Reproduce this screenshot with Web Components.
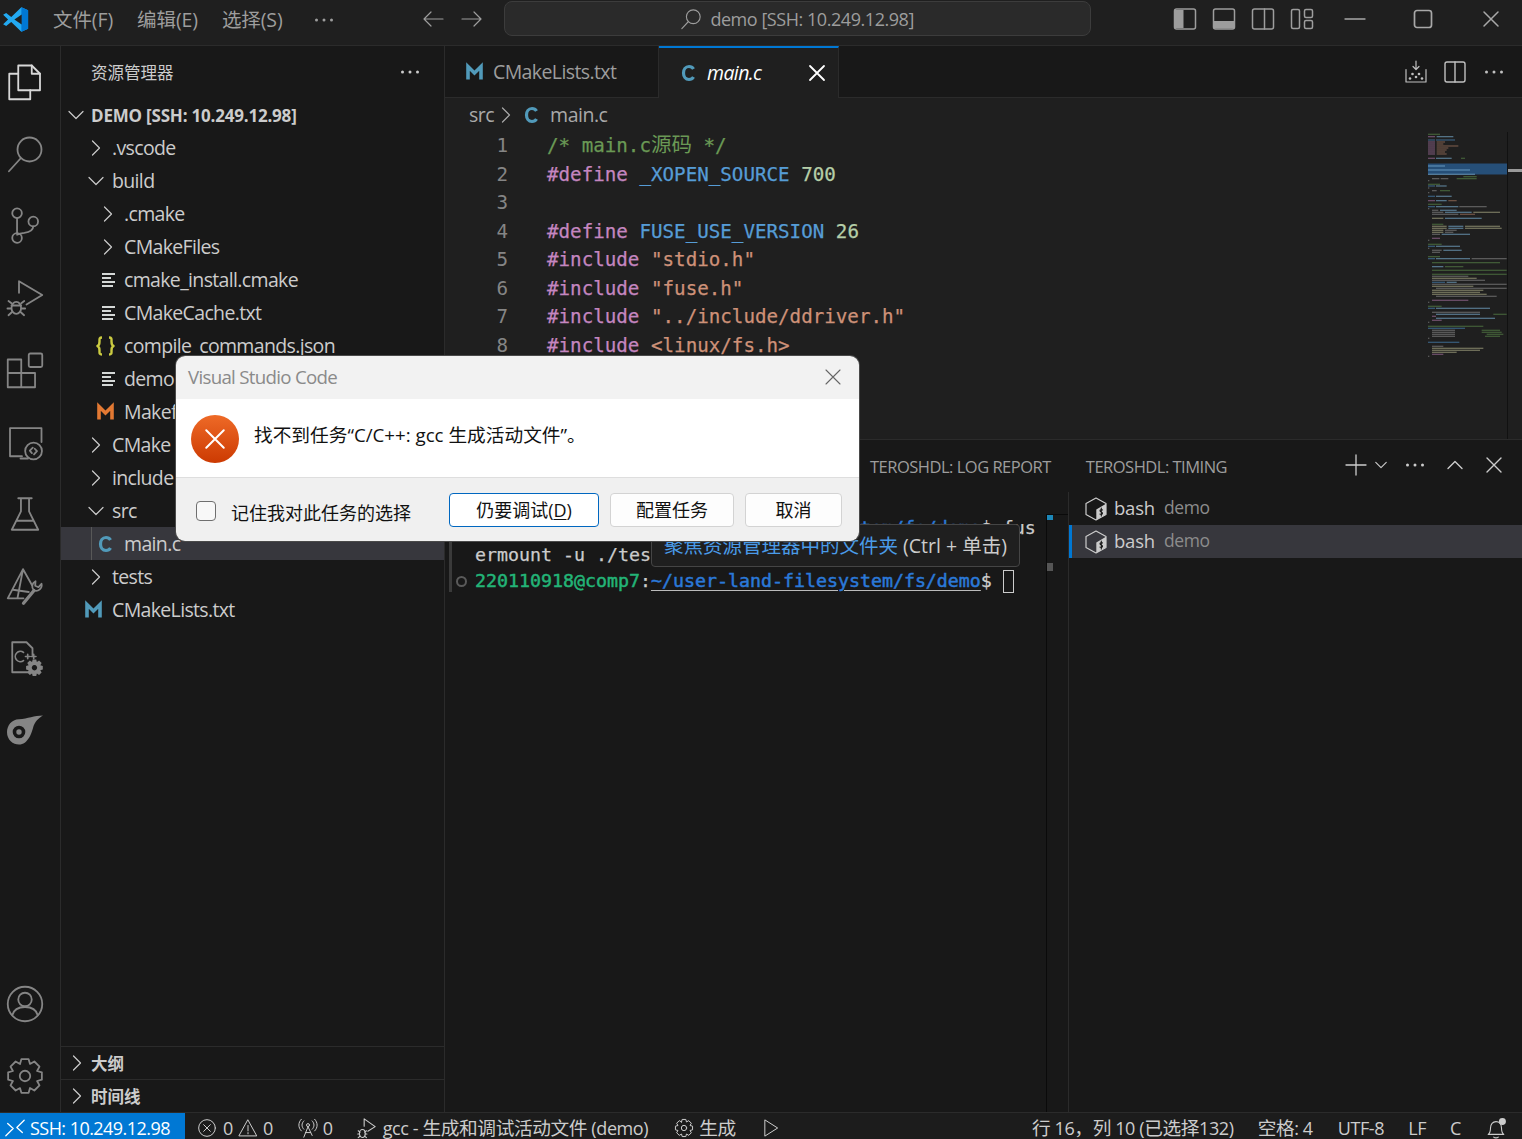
<!DOCTYPE html>
<html lang="zh">
<head>
<meta charset="utf-8">
<title>main.c - demo</title>
<style>
    html, body {
        margin: 0;
        height: 100%;
        overflow: hidden;
        background: #181818;
    }
    body {
        display: flex;
        flex-direction: column;
        position: relative;
        font-family: "Open Sans", "Noto Sans CJK SC", sans-serif;
        color: #cccccc;
    }
</style>
</head>
<body>
<vs-titlebar></vs-titlebar>
<vs-workbench>
    <vs-activitybar></vs-activitybar>
    <vs-sidebar></vs-sidebar>
    <vs-maincolumn>
        <vs-editor></vs-editor>
        <vs-panel></vs-panel>
    </vs-maincolumn>
</vs-workbench>
<vs-statusbar></vs-statusbar>
<vs-tooltip>
    <span slot="link">聚焦资源管理器中的文件夹</span>
    <span slot="hint">(Ctrl + 单击)</span>
</vs-tooltip>
<vs-dialog></vs-dialog>

<script>
const UI_FONT = `"Open Sans", "Noto Sans CJK SC", sans-serif`;
const MONO_FONT = `"DejaVu Sans Mono", "Noto Sans CJK SC", monospace`;

// gear outline, used by settings and the small ones
function gearPath(cx, cy, ro, ri, n) {
    let d = "";
    const step = Math.PI * 2 / n;
    for (let i = 0; i < n; i++) {
        const a = i * step - Math.PI / 2;
        const pts = [[ri, -0.5], [ro, -0.27], [ro, 0.27], [ri, 0.5]];
        for (const [r, f] of pts) {
            const x = cx + r * Math.cos(a + f * step);
            const y = cy + r * Math.sin(a + f * step);
            d += (d ? "L" : "M") + x.toFixed(2) + " " + y.toFixed(2);
        }
    }
    return d + "Z";
}

const ICONS = {
    // activity bar
    files: `<path d="M7.5 6V1h9l5.5 5.5v11H7.5z"/><path d="M16.5 1v5.5H22"/><path d="M7.5 6.5H1.5v17h14v-6"/>`,
    search: `<circle cx="15" cy="9" r="8"/><path d="M9 15L1.3 23.5"/>`,
    scm: `<circle cx="6.7" cy="3.5" r="3.2"/><circle cx="6.7" cy="20" r="3.2"/><circle cx="17.5" cy="9" r="3.2"/><path d="M6.7 6.7v10.1M17.5 12.2c0 3.2-3 4-6 4.4-3 .3-4.8 1.2-4.8 1.2"/>`,
    debug: `<path d="M8 8.5V.8L23.5 10l-10.5 6.3"/><ellipse cx="6.2" cy="18.6" rx="3.2" ry="4"/><path d="M3 15.5l-2-1.5M9.5 15.5l2-1.5M2.8 19H.3M9.6 19h2.5M3.2 21.5L1 23.5M9.2 21.5l2.2 2M3 17h6.4"/>`,
    extensions: `<path d="M.5 5h9v9h-9zM.5 14h9v9.5h-9zM9.5 14h9.2v9.5H9.5z"/><rect x="14.5" y="1" width="9" height="9" rx="1"/>`,
    remote: `<path d="M10 21.5H2V2.8h21V12"/><path d="M9 23h5"/><circle cx="17.7" cy="18" r="5.6"/><path d="M17.2 15.8l-2 2 1.4 1.6M18.5 16.5l1.5 1.6-2 2.2"/>`,
    flask: `<path d="M7.5 1.5h9M9.3 1.5v8.7L3.2 22.5h17.6L14.7 10.2V1.5M6.2 16.5h11.6"/>`,
    teros: `<path d="M10.7.8L.5 20.2h10.5M10.7.8l6 10.7M10.7.8L7 20M4 14.5l10.5 1.5"/><path d="M11 23.5l7-8.5" stroke-width="2.2"/><path d="M18 15a3.8 3.8 0 0 1 1-6.2l-.2 3 2.2 1 2-2.3a3.8 3.8 0 0 1-5 4.5z"/>`,
    cppdoc: `<path d="M14 21.5H3.5V1.5H13l4 4V10"/><path d="M11 8.3a3.4 3.4 0 1 0 0 5.4M12.3 11h3M13.8 9.5v3M16.3 11h3M17.8 9.5v3" stroke-width="1.1"/><path fill="currentColor" fill-rule="evenodd" stroke="none" d="${gearPath(18.3, 18.5, 5.7, 4.2, 8)}M18.3 16.7a1.8 1.8 0 1 0 .01 0z"/>`,
    blob: `<path fill="currentColor" stroke="none" d="M24 2.3C18 2.3 14 4.5 8 4.8 3 5 0 9 0 13.5c0 5 4 8.2 8 8.2 6 0 8.5-7.7 9.5-11.7C18.5 6.5 21 4 24 2.3z"/><circle cx="8" cy="13.3" r="3" stroke="#181818" stroke-width="2.4"/>`,
    account: `<circle cx="12" cy="12" r="11.5"/><circle cx="12" cy="9" r="4.5"/><path d="M3.5 19.5c1-3.8 4-5.5 8.5-5.5s7.5 1.7 8.5 5.5"/>`,
    gear: `<path d="${gearPath(12, 12, 11.5, 8.7, 8)}"/><circle cx="12" cy="12" r="3.5"/>`,
    // generic
    chevR: `<path d="M8.5 5l7 7-7 7"/>`,
    chevD: `<path d="M5 8.5l7 7 7-7"/>`,
    chevU: `<path d="M5 15.5l7-7 7 7"/>`,
    close: `<path d="M5 5l14 14M19 5L5 19"/>`,
    dots: `<circle cx="4.5" cy="12" r="1.5" fill="currentColor" stroke="none"/><circle cx="12" cy="12" r="1.5" fill="currentColor" stroke="none"/><circle cx="19.5" cy="12" r="1.5" fill="currentColor" stroke="none"/>`,
    arrowL: `<path d="M22 12H3M10 5l-7 7 7 7"/>`,
    arrowR: `<path d="M2 12h19M14 5l7 7-7 7"/>`,
    plus: `<path d="M12 2v20M2 12h20"/>`,
    // title bar layout
    sideOn: `<rect x="1.5" y="2" width="21" height="20" rx="2"/><path fill="currentColor" stroke="none" d="M2 3h8.5v18H2z"/>`,
    panelOn: `<rect x="1.5" y="2" width="21" height="20" rx="2"/><path fill="currentColor" stroke="none" d="M2 14h20v7.5H2z"/>`,
    auxOff: `<rect x="1.5" y="2" width="21" height="20" rx="2"/><path d="M13.5 2v20"/>`,
    grid: `<rect x="1.5" y="2.5" width="8" height="19" rx="1.5"/><rect x="14.5" y="2.5" width="8" height="8" rx="1.5"/><rect x="14.5" y="13.5" width="8" height="8" rx="1.5"/>`,
    minimize: `<path d="M2 12h20"/>`,
    maximize: `<rect x="3.5" y="3.5" width="17" height="17" rx="2.5"/>`,
    // editor actions
    tray: `<path d="M2 9.5V22h20V9.5M12 1v8M9 6.5l3 3 3-3"/><g fill="currentColor" stroke="none"><circle cx="8.5" cy="14" r="1.3"/><circle cx="15" cy="14" r="1.3"/><circle cx="12" cy="17" r="1.3"/><circle cx="6" cy="18.5" r="1.3"/><circle cx="18" cy="18.5" r="1.3"/></g>`,
    split: `<rect x="2" y="2" width="20" height="20" rx="2"/><path d="M12 2v20"/>`,
    // file icons
    fileM: `<path d="M6 19.5V6.5l6.5 6.5L19 6.5v13" stroke-width="3.6" stroke-linecap="butt" stroke-linejoin="miter"/>`,
    fileC: `<path d="M17.5 8C16.5 6.3 15 5.5 13 5.5 9.5 5.5 7.5 8.5 7.5 12s2 6.5 5.5 6.5c2 0 3.5-.8 4.5-2.5" stroke-width="3.2" stroke-linecap="butt"/>`,
    fileLines: `<path d="M6 6h13M6 10h9M6 14h13M6 18h11" stroke-width="1.8" stroke-linecap="butt"/>`,
    fileJson: `<path d="M9 3.5c-3 0-2.5 1.5-2.5 4S6 11.5 4.5 12C6 12.5 6.5 14 6.5 16.5s-.5 4 2.5 4M16 3.5c3 0 2.5 1.5 2.5 4s.5 4 2 4.5c-1.5.5-2 2-2 4.5s.5 4-2.5 4" stroke-width="2.4" stroke-linecap="butt"/>`,
    // terminal
    bash: `<path d="M12 1l10 5.5v11L12 23 2 17.5v-11z"/><path fill="currentColor" stroke="none" d="M12.3 12.5L22 6.8v10.5l-9.7 5.4z"/><path stroke="#181818" stroke-width="1.1" d="M18.5 13c-1-.8-2.5-.3-2.500.8 0 1.500 2.500 1 2.500 2.500 0 1.100-1.500 1.500-2.500.8M17.300 11v8"/>`,
    // status bar
    remoteSsh: `<path d="M2 20.5L10 12.5 4 7M22 3.5L14 11.5 20 17"/>`,
    errorCircle: `<circle cx="12" cy="12" r="10"/><path d="M8 8l8 8M16 8l-8 8"/>`,
    warning: `<path d="M12 2.5L22.5 21.5h-21zM12 9v6.5M12 17.500v1.500"/>`,
    broadcast: `<circle cx="12" cy="8.5" r="1.8"/><path d="M12 10.5L7 23M12 10.5l5 10.5M9 17.5h6M7 3.500c-3 3-3 7 0 10M17 3.500c3 3 3 7 0 10M4 1.500c-4 4-4 10 0 14M20 1.500c4 4 4 10 0 14"/>`,
    debugSmall: `<path d="M10 10V2l12 8.5-8 5"/><ellipse cx="8" cy="18" rx="3.2" ry="4.3"/><path d="M3.5 15l2 1.5M12.5 15l-2 1.5M3 18.5h2M11 18.5h2M3.5 22.5l2-1.5M12.5 22.5l-2-1.5"/>`,
    gearSmall: `<path d="${gearPath(12, 12, 10.5, 7.8, 8)}"/><circle cx="12" cy="12" r="3.2"/>`,
    play: `<path d="M5 2.5L20 12 5 21.5z"/>`,
    bell: `<path d="M3.5 19c2-1.5 2.5-3 2.5-7 0-4 2.5-7 6-7s6 3 6 7c0 4 .5 5.5 2.5 7zM9.5 22c1 1 4 1 5 0"/><circle cx="19" cy="5" r="3.8" fill="currentColor" stroke="none"/>`,
    searchSmall: `<circle cx="14.5" cy="9.5" r="7.5"/><path d="M9 15L2 22.5"/>`
};

class VsIcon extends HTMLElement {
    constructor() {
        super();
        this.root = this.attachShadow({ mode: "open" });
    }

    connectedCallback() {
        const size = this.getAttribute("size") || 24;
        const sw = this.getAttribute("sw") || 1.2;
        this.root.innerHTML = `
            <style>
                :host { display: inline-flex; flex: none; width: ${size}px; height: ${size}px; }
                svg { width: 100%; height: 100%; display: block; overflow: visible; }
            </style>
            <svg viewBox="0 0 24 24" fill="none" stroke="currentColor" stroke-width="${sw}"
                 stroke-linecap="round" stroke-linejoin="round">${ICONS[this.getAttribute("name")] || ""}</svg>
        `;
    }
}
window.customElements.define("vs-icon", VsIcon);

class VsTitlebar extends HTMLElement {
    constructor() {
        super();
        this.root = this.attachShadow({ mode: "open" });
    }

    connectedCallback() {
        this.root.innerHTML = `
            <style>
                :host {
                    display: flex;
                    flex: none;
                    align-items: center;
                    height: 45px;
                    background: #1f1f1f;
                    border-bottom: 1px solid #2b2b2b;
                    color: #9d9d9d;
                    font: 19.5px/1 ${UI_FONT};
                    letter-spacing: -0.1px;
                }
                .logo { margin-left: 2px; width: 27px; height: 27px; margin-top: -7px; }
                .menu { margin-left: 24px; margin-top: -6px; display: flex; gap: 24px; align-items: center; }
                .menu vs-icon { margin-left: 5px; }
                .nav { margin-left: 85px; display: flex; gap: 15px; margin-top: -7px; }
                .search {
                    margin-left: 20px;
                    width: 585px;
                    height: 33px;
                    margin-top: -8px;
                    display: flex;
                    align-items: center;
                    justify-content: center;
                    gap: 8px;
                    background: #2a2a2a;
                    border: 1px solid #3c3c3c;
                    border-radius: 8px;
                    font-size: 18px;
                    letter-spacing: -0.45px;
                }
                .layout { margin-left: 82px; display: flex; gap: 15px; margin-top: -7px; }
                .win { display: flex; margin-left: 29px; gap: 44px; margin-top: -7px; color: #a8a8a8; }
            </style>
            <svg class="logo" viewBox="0 0 24 24">
                <path fill="#23a9f1" d="M17.2 1l6 2.8v16.4l-6 2.8-9-8.8-4.5 3.5L1 16.2 5.4 12 1 7.8l2.7-1.5 4.5 3.5z"/>
                <path fill="#0078d4" d="M17.2 1l6 2.8v16.4l-6 2.8z"/>
                <path fill="#1f1f1f" d="M17.5 7.5L11 12l6.5 4.5z"/>
            </svg>
            <div class="menu">
                <span>文件(F)</span><span>编辑(E)</span><span>选择(S)</span>
                <vs-icon name="dots" size="24"></vs-icon>
            </div>
            <div class="nav">
                <vs-icon name="arrowL" size="24"></vs-icon>
                <vs-icon name="arrowR" size="24"></vs-icon>
            </div>
            <div class="search">
                <vs-icon name="searchSmall" size="22"></vs-icon>
                <span>demo [SSH: 10.249.12.98]</span>
            </div>
            <div class="layout">
                <vs-icon name="sideOn" size="24" sw="1.5"></vs-icon>
                <vs-icon name="panelOn" size="24" sw="1.5"></vs-icon>
                <vs-icon name="auxOff" size="24" sw="1.5"></vs-icon>
                <vs-icon name="grid" size="24" sw="1.5"></vs-icon>
            </div>
            <div class="win">
                <vs-icon name="minimize" size="24" sw="1.3"></vs-icon>
                <vs-icon name="maximize" size="24" sw="1.7"></vs-icon>
                <vs-icon name="close" size="24" sw="1.5"></vs-icon>
            </div>
        `;
    }
}
window.customElements.define("vs-titlebar", VsTitlebar);

class VsWorkbench extends HTMLElement {
    constructor() {
        super();
        this.root = this.attachShadow({ mode: "open" });
        this.root.innerHTML = `
            <style>:host { display: flex; flex: 1; min-height: 0; }</style>
            <slot></slot>
        `;
    }
}
window.customElements.define("vs-workbench", VsWorkbench);

class VsMaincolumn extends HTMLElement {
    constructor() {
        super();
        this.root = this.attachShadow({ mode: "open" });
        this.root.innerHTML = `
            <style>:host { display: flex; flex-direction: column; flex: 1; min-width: 0; }</style>
            <slot></slot>
        `;
    }
}
window.customElements.define("vs-maincolumn", VsMaincolumn);

class VsActivitybar extends HTMLElement {
    constructor() {
        super();
        this.root = this.attachShadow({ mode: "open" });
    }

    connectedCallback() {
        const top = ["search", "scm", "debug", "extensions", "remote", "flask", "teros", "cppdoc", "blob"];
        this.root.innerHTML = `
            <style>
                :host {
                    display: flex;
                    flex-direction: column;
                    justify-content: space-between;
                    flex: none;
                    width: 60px;
                    background: #181818;
                    border-right: 1px solid #2b2b2b;
                    color: #858585;
                }
                .item { height: 72px; display: flex; align-items: center; padding-left: 7px; }
                .active { color: #d7d7d7; }
            </style>
            <div>
                <div class="item active"><vs-icon name="files" size="36"></vs-icon></div>
                ${top.map(n => `<div class="item"><vs-icon name="${n}" size="36"></vs-icon></div>`).join("")}
            </div>
            <div>
                <div class="item"><vs-icon name="account" size="36"></vs-icon></div>
                <div class="item"><vs-icon name="gear" size="36"></vs-icon></div>
            </div>
        `;
    }
}
window.customElements.define("vs-activitybar", VsActivitybar);

class VsTreeRow extends HTMLElement {
    constructor() {
        super();
        this.root = this.attachShadow({ mode: "open" });
    }

    connectedCallback() {
        const iconX = Number(this.getAttribute("icon-x"));
        const labelX = Number(this.getAttribute("label-x"));
        const icon = this.getAttribute("icon");
        const color = this.getAttribute("color") || "#cccccc";
        this.root.innerHTML = `
            <style>
                :host {
                    display: flex;
                    align-items: center;
                    height: 33px;
                    padding-left: ${iconX - 12 - 61}px;
                    color: #cccccc;
                    font: 19.5px/1 ${UI_FONT};
                    letter-spacing: -0.65px;
                    white-space: nowrap;
                    overflow: hidden;
                    position: relative;
                }
                :host([selected]) { background: #37373d; }
                :host([selected])::before {
                    content: "";
                    position: absolute;
                    left: 30px;
                    top: 0;
                    bottom: 0;
                    width: 1px;
                    background: #585858;
                }
                :host([root]) { font-size: 17px; font-weight: 700; letter-spacing: -0.2px; }
                vs-icon { color: ${color}; }
                .label { margin-left: ${labelX - iconX - 12}px; margin-top: 1px; }
            </style>
            <vs-icon name="${icon}" size="24" sw="${this.getAttribute("sw") || 1.2}"></vs-icon>
            <span class="label"><slot></slot></span>
        `;
    }
}
window.customElements.define("vs-tree-row", VsTreeRow);

class VsSection extends HTMLElement {
    constructor() {
        super();
        this.root = this.attachShadow({ mode: "open" });
        this.root.innerHTML = `
            <style>
                :host {
                    display: flex;
                    align-items: center;
                    flex: none;
                    height: 32px;
                    border-top: 1px solid #2b2b2b;
                    padding-left: 4px;
                    color: #cccccc;
                    font: 700 16.5px/1 ${UI_FONT};
                }
                span { margin-left: 2px; margin-top: 2px; }
            </style>
            <vs-icon name="chevR" size="24"></vs-icon>
            <span><slot></slot></span>
        `;
    }
}
window.customElements.define("vs-section", VsSection);

class VsSidebar extends HTMLElement {
    constructor() {
        super();
        this.root = this.attachShadow({ mode: "open" });
    }

    connectedCallback() {
        const lvl1 = `icon-x="96" label-x="112"`;
        const lvl2 = `icon-x="108" label-x="124"`;
        const file2 = `icon-x="108" label-x="124" icon="fileLines" color="#d4d7d6"`;
        this.root.innerHTML = `
            <style>
                :host {
                    display: flex;
                    flex-direction: column;
                    flex: none;
                    width: 383px;
                    background: #181818;
                    border-right: 1px solid #2b2b2b;
                }
                .head {
                    display: flex;
                    align-items: center;
                    justify-content: space-between;
                    height: 52px;
                    flex: none;
                    padding: 0 22px 0 30px;
                    color: #cccccc;
                    font: 16.5px/1 ${UI_FONT};
                }
                .head span { margin-top: 2px; }
                .tree { flex: 1; min-height: 0; }
            </style>
            <div class="head"><span>资源管理器</span><vs-icon name="dots" size="24"></vs-icon></div>
            <div class="tree">
                <vs-tree-row root icon="chevD" icon-x="76" label-x="91">DEMO [SSH: 10.249.12.98]</vs-tree-row>
                <vs-tree-row icon="chevR" ${lvl1}>.vscode</vs-tree-row>
                <vs-tree-row icon="chevD" ${lvl1}>build</vs-tree-row>
                <vs-tree-row icon="chevR" ${lvl2}>.cmake</vs-tree-row>
                <vs-tree-row icon="chevR" ${lvl2}>CMakeFiles</vs-tree-row>
                <vs-tree-row ${file2}>cmake_install.cmake</vs-tree-row>
                <vs-tree-row ${file2}>CMakeCache.txt</vs-tree-row>
                <vs-tree-row icon="fileJson" color="#cbcb41" icon-x="105" label-x="124">compile_commands.json</vs-tree-row>
                <vs-tree-row ${file2}>demo</vs-tree-row>
                <vs-tree-row icon="fileM" color="#e37933" icon-x="105" label-x="124">Makefile</vs-tree-row>
                <vs-tree-row icon="chevR" ${lvl1}>CMake</vs-tree-row>
                <vs-tree-row icon="chevR" ${lvl1}>include</vs-tree-row>
                <vs-tree-row icon="chevD" ${lvl1}>src</vs-tree-row>
                <vs-tree-row selected icon="fileC" color="#519aba" icon-x="105" label-x="124">main.c</vs-tree-row>
                <vs-tree-row icon="chevR" ${lvl1}>tests</vs-tree-row>
                <vs-tree-row icon="fileM" color="#519aba" icon-x="93" label-x="112">CMakeLists.txt</vs-tree-row>
            </div>
            <vs-section>大纲</vs-section>
            <vs-section>时间线</vs-section>
        `;
    }
}
window.customElements.define("vs-sidebar", VsSidebar);

class VsMinimap extends HTMLElement {
    constructor() {
        super();
        this.root = this.attachShadow({ mode: "open" });

        // rows read off the reference at 3x: y, then colour + x range
        this._rows = `35 g84-120|42 p84-105 l110-160|52 b84-105 b108-165|58 p84-105 o110-135|64 p84-105 o110-130
70 p84-105 o110-175|76 p84-105 o110-145|82 p84-105 o110-140|88 p84-105 o110-135|94 p84-105 o110-140
107 p84-105 l108-155 g183-195|130 l84-135|142 l84-210|155 l84-225|162 g190-230|168 w96-118 w122-145 g170-230
174 w84-88|185 g84-120|190 b84-105 l108-140|196 w84-88|204 w96-110 g120-150|210 w84-88|221 b84-105 l108-155
234 p84-105 l108-140 o145-170|245 g84-125|252 b84-105 l108-175 w178-260|258 w84-88|263 w96-115 l120-170
269 w96-130 l135-215 y220-300|275 w96-175 o180-225|287 y96-130 l135-245|305 g96-130|311 y96-140 l145-190 y195-300
317 y96-140 l145-190 y195-305|323 y96-130 w135-170|329 y96-130 w135-160|335 w96-120 l125-210|347 p96-120|353 w84-88
365 g84-125|371 b84-105 l108-180|377 w84-88|383 w96-125 l130-185|389 w96-120|402 g84-120|408 b84-105 l108-210 w215-320
420 g96-300|432 l96-130 g135-190|443 g96-320|455 g96-320|461 w96-205|467 y96-230|473 w96-255|479 b96-135 l140-170
485 w96-320|491 y96-220|497 w108-320|503 y96-250|509 y96-240|515 y96-260|521 w108-290|533 p96-205|539 w84-88
551 g84-125|557 b84-105 l108-270|569 w96-240|575 l108-240 g280-320|581 p96-108|587 l108-285|593 p96-125|599 w84-88
611 g84-250|617 b84-195|623 w96-165 g245-300|629 w96-165 g245-305|635 w96-165 g260-310|641 w96-165 g255-300|647 w84-88
659 b84-178|671 w96-130|677 y96-250|683 y96-240|689 y96-170|695 p96-130|701 w84-88`;
        this._colors = { g: "#5b8a4a", p: "#a972a4", b: "#4b89bd", l: "#7fb8dc", o: "#a97a62", w: "#8c8c8c", y: "#b5b58d" };
    }

    connectedCallback() {
        let rects = "";
        for (const row of this._rows.split(/[|\n]/)) {
            const parts = row.trim().split(" ");
            const y = (Number(parts[0]) - 30) / 3;
            for (const seg of parts.slice(1)) {
                const [a, b] = seg.slice(1).split("-").map(Number);
                rects += `<rect x="${(a - 84) / 3}" y="${y}" width="${(b - a) / 3}" height="1.3" fill="${this._colors[seg[0]]}" opacity=".55"/>`;
            }
        }
        this.root.innerHTML = `
            <style>
                :host { display: block; flex: none; width: 94px; height: 308px; overflow: hidden; }
                svg { display: block; width: 94px; height: 308px; }
            </style>
            <svg viewBox="0 0 94 308">
                <rect x="0" y="31.5" width="79" height="11" fill="#264f78"/>
                ${rects}
                <rect x="79" y="0" width="1" height="308" fill="#111"/>
                <rect x="80" y="37" width="14" height="3" fill="#9a9a9a"/>
            </svg>
        `;
    }
}
window.customElements.define("vs-minimap", VsMinimap);

class VsEditor extends HTMLElement {
    constructor() {
        super();
        this.root = this.attachShadow({ mode: "open" });
    }

    connectedCallback() {
        const lines = [
            `<i class="c">/* main.c<span class="cjk">源码</span> */</i>`,
            `<i class="p">#define</i> <i class="m">_XOPEN_SOURCE</i> <i class="n">700</i>`,
            ``,
            `<i class="p">#define</i> <i class="m">FUSE_USE_VERSION</i> <i class="n">26</i>`,
            `<i class="p">#include</i> <i class="s">"stdio.h"</i>`,
            `<i class="p">#include</i> <i class="s">"fuse.h"</i>`,
            `<i class="p">#include</i> <i class="s">"../include/ddriver.h"</i>`,
            `<i class="p">#include</i> <i class="s">&lt;linux/fs.h&gt;</i>`
        ];
        this.root.innerHTML = `
            <style>
                :host {
                    display: flex;
                    flex-direction: column;
                    flex: none;
                    height: 393px;
                    background: #1f1f1f;
                    overflow: hidden;
                }
                .tabs {
                    display: flex;
                    flex: none;
                    height: 51px;
                    background: #181818;
                    border-bottom: 1px solid #2b2b2b;
                    font: 19.5px/1 ${UI_FONT};
                    letter-spacing: -0.6px;
                }
                .tab {
                    display: flex;
                    align-items: center;
                    height: 51px;
                    box-sizing: border-box;
                    border-right: 1px solid #2b2b2b;
                    color: #9d9d9d;
                }
                .tab.one { width: 214px; padding-left: 17px; }
                .tab.two {
                    width: 180px;
                    padding-left: 17px;
                    height: 52px;
                    background: #1f1f1f;
                    border-top: 2px solid #0078d4;
                    color: #ffffff;
                    font-style: italic;
                }
                .tab .name { margin-left: 7px; }
                .tab.two .name { flex: 1; }
                .tab.two .x { margin-right: 9px; color: #fff; }
                .actions {
                    margin-left: auto;
                    display: flex;
                    align-items: center;
                    gap: 15px;
                    padding-right: 16px;
                    color: #c0c0c0;
                }
                .crumbs {
                    display: flex;
                    align-items: center;
                    flex: none;
                    height: 34px;
                    padding-left: 24px;
                    color: #a9a9a9;
                    font: 19.5px/1 ${UI_FONT};
                    letter-spacing: -0.5px;
                }
                .crumbs .c-ic { color: #519aba; margin-left: 1px; }
                .crumbs .main { margin-left: 7px; }
                .body { display: flex; flex: 1; min-height: 0; }
                .code { flex: 1; display: flex; font: 19.2px/28.5px ${MONO_FONT}; white-space: pre; }
                .nums { width: 63px; text-align: right; color: #858585; }
                .src { margin-left: 39px; margin-top: -1px; color: #cccccc; -webkit-text-stroke: 0.25px; }
                i { font-style: normal; }
                .c { color: #6a9955; }
                .cjk { font-size: 20.5px; -webkit-text-stroke: 0; }
                .p { color: #c586c0; }
                .m { color: #569cd6; }
                .n { color: #b5cea8; }
                .s { color: #ce9178; }
            </style>
            <div class="tabs">
                <div class="tab one">
                    <vs-icon name="fileM" size="24" style="color:#519aba"></vs-icon>
                    <span class="name">CMakeLists.txt</span>
                </div>
                <div class="tab two">
                    <vs-icon name="fileC" size="24" style="color:#519aba"></vs-icon>
                    <span class="name">main.c</span>
                    <vs-icon class="x" name="close" size="24" sw="1.8"></vs-icon>
                </div>
                <div class="actions">
                    <vs-icon name="tray" size="24"></vs-icon>
                    <vs-icon name="split" size="24" sw="1.4"></vs-icon>
                    <vs-icon name="dots" size="24"></vs-icon>
                </div>
            </div>
            <div class="crumbs">
                <span>src</span>
                <vs-icon name="chevR" size="24"></vs-icon>
                <vs-icon class="c-ic" name="fileC" size="24"></vs-icon>
                <span class="main">main.c</span>
            </div>
            <div class="body">
                <div class="code">
                    <div class="nums">${lines.map((l, i) => `<div>${i + 1}</div>`).join("")}</div>
                    <div class="src">${lines.map(l => `<div>${l || " "}</div>`).join("")}</div>
                </div>
                <vs-minimap></vs-minimap>
            </div>
        `;
    }
}
window.customElements.define("vs-editor", VsEditor);

class VsPanel extends HTMLElement {
    constructor() {
        super();
        this.root = this.attachShadow({ mode: "open" });
    }

    connectedCallback() {
        const prompt = `<b class="g">220110918@comp7</b>:<b class="u">~/user-land-filesystem/fs/demo</b>$`;
        this.root.innerHTML = `
            <style>
                :host {
                    display: flex;
                    flex-direction: column;
                    flex: 1;
                    min-height: 0;
                    background: #181818;
                    border-top: 1px solid #2b2b2b;
                }
                .bar {
                    display: flex;
                    align-items: center;
                    flex: none;
                    height: 52px;
                    padding-left: 425px;
                    color: #9d9d9d;
                    font: 16.5px/1 ${UI_FONT};
                    letter-spacing: -0.5px;
                }
                .bar span { margin-top: 2px; }
                .bar .t2 { margin-left: 35px; }
                .acts { margin-left: auto; margin-top: -2px; display: flex; align-items: center; color: #cccccc; padding-right: 16px; }
                .acts .plus { margin-right: 4px; }
                .acts .d { margin: 0 16px 0 13px; }
                .acts .u { margin: 0 15px 0 0; }
                .body { display: flex; flex: 1; min-height: 0; }
                .term { flex: 1; display: flex; min-width: 0; overflow: hidden; }
                .deco-bar { width: 3px; height: 100px; margin-left: 4px; background: #3a3a3a; flex: none; }
                .lines {
                    margin-left: 3px;
                    padding-top: 23px;
                    font: 18.27px/26.5px ${MONO_FONT};
                    color: #cccccc;
                    -webkit-text-stroke: 0.25px;
                }
                .line { display: flex; white-space: pre; }
                .gut { width: 20px; flex: none; display: flex; align-items: center; }
                .gut span { width: 7px; height: 7px; flex: none; border: 2.5px solid #5a5a5a; border-radius: 50%; margin-left: 1px; }
                b.g { color: #23b477; font-weight: 400; -webkit-text-stroke: 0.5px; }
                b.u { color: #2b79d8; text-decoration: underline; text-decoration-color: #bbb; text-underline-offset: 3px; font-weight: 400; -webkit-text-stroke: 0.5px; }
                .cur {
                    display: inline-block;
                    width: 9px;
                    height: 21px;
                    border: 1px solid #cccccc;
                    vertical-align: -6px;
                    margin-left: 11px;
                }
                .ruler {
                    width: 21px;
                    flex: none;
                    margin-top: 22px;
                    border-left: 1px solid #0a0a0a;
                    border-top: 1px solid #0a0a0a;
                    display: flex;
                    flex-direction: column;
                }
                .ruler i { display: block; width: 6px; margin-left: 0; }
                .ruler .a { height: 5px; background: #1c87b8; }
                .ruler .b { height: 8px; background: #555; margin-top: 43px; }
                .list { width: 453px; flex: none; border-left: 1px solid #2b2b2b; }
                .it {
                    display: flex;
                    align-items: center;
                    height: 33px;
                    box-sizing: border-box;
                    padding-left: 15px;
                    font: 18.5px/1 ${UI_FONT};
                    letter-spacing: -0.2px;
                    color: #cccccc;
                }
                .it.sel { background: #37373d; border-left: 3px solid #0078d4; padding-left: 12px; }
                .it span { margin-left: 6px; margin-top: -1px; }
                .it em { font-style: normal; font-size: 17.5px; margin-left: 9px; margin-top: -1px; color: #8c8c8c; letter-spacing: -0.4px; }
            </style>
            <div class="bar">
                <span>TEROSHDL: LOG REPORT</span>
                <span class="t2">TEROSHDL: TIMING</span>
                <div class="acts">
                    <vs-icon class="plus" name="plus" size="24" sw="1.3"></vs-icon>
                    <vs-icon name="chevD" size="18" sw="1.5"></vs-icon>
                    <vs-icon class="d" name="dots" size="24"></vs-icon>
                    <vs-icon class="u" name="chevU" size="24" sw="1.4"></vs-icon>
                    <vs-icon name="close" size="24" sw="1.4"></vs-icon>
                </div>
            </div>
            <div class="body">
                <div class="term">
                    <div class="deco-bar"></div>
                    <div class="lines">
                        <div class="line"><div class="gut"></div><div>${prompt} fus</div></div>
                        <div class="line"><div class="gut"></div><div>ermount -u ./tests/mnt</div></div>
                        <div class="line"><div class="gut"><span></span></div><div>${prompt}<span class="cur"></span></div></div>
                    </div>
                </div>
                <div class="ruler"><i class="a"></i><i class="b"></i></div>
                <div class="list">
                    <div class="it"><vs-icon name="bash" size="24"></vs-icon><span>bash</span><em>demo</em></div>
                    <div class="it sel"><vs-icon name="bash" size="24"></vs-icon><span>bash</span><em>demo</em></div>
                </div>
            </div>
        `;
    }
}
window.customElements.define("vs-panel", VsPanel);

class VsStatusbar extends HTMLElement {
    constructor() {
        super();
        this.root = this.attachShadow({ mode: "open" });
    }

    connectedCallback() {
        this.root.innerHTML = `
            <style>
                :host {
                    display: flex;
                    align-items: center;
                    flex: none;
                    height: 26px;
                    background: #1c1c1c;
                    border-top: 1px solid #2b2b2b;
                    color: #cccccc;
                    font: 18px/1 ${UI_FONT};
                    letter-spacing: -0.4px;
                    white-space: nowrap;
                }
                .ssh {
                    display: flex;
                    align-items: center;
                    height: 100%;
                    width: 185px;
                    box-sizing: border-box;
                    padding-left: 4px;
                    background: #0078d4;
                    color: #ffffff;
                    letter-spacing: -0.55px;
                }
                .ssh > * { margin-top: 4px; }
                .ssh span { margin-left: 4px; }
                .item { display: flex; align-items: center; }
                .left { display: flex; align-items: center; margin-top: 4px; }
                .right { margin-left: auto; display: flex; align-items: center; padding-right: 15px; margin-top: 4px; }
                .cjk { font-size: 18.7px; }
            </style>
            <div class="ssh"><vs-icon name="remoteSsh" size="22" sw="1.4"></vs-icon><span>SSH: 10.249.12.98</span></div>
            <div class="left">
                <div class="item" style="margin-left:12px"><vs-icon name="errorCircle" size="20"></vs-icon><span style="margin-left:6px">0</span></div>
                <div class="item" style="margin-left:5px"><vs-icon name="warning" size="20"></vs-icon><span style="margin-left:5px">0</span></div>
                <div class="item" style="margin-left:25px"><vs-icon name="broadcast" size="20"></vs-icon><span style="margin-left:5px">0</span></div>
                <div class="item" style="margin-left:22px"><vs-icon name="debugSmall" size="22"></vs-icon><span style="margin-left:6px">gcc - <span class="cjk">生成和调试活动文件</span> (demo)</span></div>
                <div class="item" style="margin-left:26px"><vs-icon name="gearSmall" size="20"></vs-icon><span class="cjk" style="margin-left:5px">生成</span></div>
                <div class="item" style="margin-left:25px"><vs-icon name="play" size="20"></vs-icon></div>
            </div>
            <div class="right">
                <span><span class="cjk">行</span> 16<span class="cjk">，列</span> 10 (<span class="cjk">已选择</span>132)</span>
                <span style="margin-left:24px"><span class="cjk">空格</span>: 4</span>
                <span style="margin-left:25px">UTF-8</span>
                <span style="margin-left:24px">LF</span>
                <span style="margin-left:24px">C</span>
                <vs-icon name="bell" size="22" style="margin-left:24px"></vs-icon>
            </div>
        `;
    }
}
window.customElements.define("vs-statusbar", VsStatusbar);

class VsTooltip extends HTMLElement {
    constructor() {
        super();
        this.root = this.attachShadow({ mode: "open" });
        this.root.innerHTML = `
            <style>
                :host {
                    position: absolute;
                    left: 651px;
                    top: 524px;
                    width: 369px;
                    height: 43px;
                    box-sizing: border-box;
                    display: flex;
                    align-items: center;
                    padding-left: 12px;
                    background: #1f1f1f;
                    border: 1px solid #454545;
                    border-radius: 4px;
                    color: #cccccc;
                    font: 19.5px/1 ${UI_FONT};
                    white-space: nowrap;
                }
                .link { color: #4a9be8; margin-right: 5px; }
            </style>
            <span class="link"><slot name="link"></slot></span>
            <slot name="hint"></slot>
        `;
    }
}
window.customElements.define("vs-tooltip", VsTooltip);

class VsDialog extends HTMLElement {
    constructor() {
        super();
        this.root = this.attachShadow({ mode: "open" });
    }

    connectedCallback() {
        this.root.innerHTML = `
            <style>
                :host {
                    position: absolute;
                    left: 176px;
                    top: 356px;
                    width: 683px;
                    display: flex;
                    flex-direction: column;
                    border-radius: 9px;
                    overflow: hidden;
                    box-shadow: 0 0 0 1px #4a4a4a;
                    font: 18.7px/1 ${UI_FONT};
                    color: #111;
                }
                .title {
                    display: flex;
                    align-items: center;
                    justify-content: space-between;
                    height: 43px;
                    padding: 0 14px 0 12px;
                    background: #f2f2f2;
                    color: #8a8a8a;
                    letter-spacing: -0.7px;
                }
                .title vs-icon { color: #666; margin-top: -1px; }
                .msg {
                    display: flex;
                    align-items: center;
                    height: 78px;
                    box-sizing: border-box;
                    padding-left: 15px;
                    background: #ffffff;
                }
                .err {
                    width: 48px;
                    height: 48px;
                    flex: none;
                    border-radius: 50%;
                    background: linear-gradient(#ee6a27, #cc3a02);
                    display: flex;
                    align-items: center;
                    justify-content: center;
                    color: #fff;
                    margin-top: 1px;
                }
                .text { margin-left: 15px; margin-top: -6px; }
                .foot {
                    display: flex;
                    align-items: center;
                    height: 64px;
                    box-sizing: border-box;
                    padding: 0 17px 0 20px;
                    background: #f0f0f0;
                    border-top: 1px solid #dedede;
                }
                .chk {
                    width: 20px;
                    height: 20px;
                    box-sizing: border-box;
                    border: 1px solid #6f6f6f;
                    border-radius: 4px;
                    background: #f8f8f8;
                    margin-top: 3px;
                }
                label { margin-left: 15px; margin-top: 7px; font-size: 18px; }
                .btns { margin-left: auto; display: flex; gap: 11px; }
                button {
                    height: 34px;
                    padding: 0;
                    background: #fdfdfd;
                    border: 1px solid #d3d3d3;
                    border-radius: 4px;
                    color: #111;
                    font: 18px/1 ${UI_FONT};
                }
                button.main { width: 150px; border-color: #0067c0; background: #fff; }
                u { text-underline-offset: 2px; }
            </style>
            <div class="title"><span>Visual Studio Code</span><vs-icon name="close" size="24" sw="1.1"></vs-icon></div>
            <div class="msg">
                <div class="err"><vs-icon name="close" size="30" sw="1.6"></vs-icon></div>
                <div class="text">找不到任务“C/C++: gcc 生成活动文件”。</div>
            </div>
            <div class="foot">
                <div class="chk"></div>
                <label>记住我对此任务的选择</label>
                <div class="btns">
                    <button class="main">仍要调试(<u>D</u>)</button>
                    <button style="width:124px">配置任务</button>
                    <button style="width:97px">取消</button>
                </div>
            </div>
        `;
    }
}
window.customElements.define("vs-dialog", VsDialog);
</script>
</body>
</html>
